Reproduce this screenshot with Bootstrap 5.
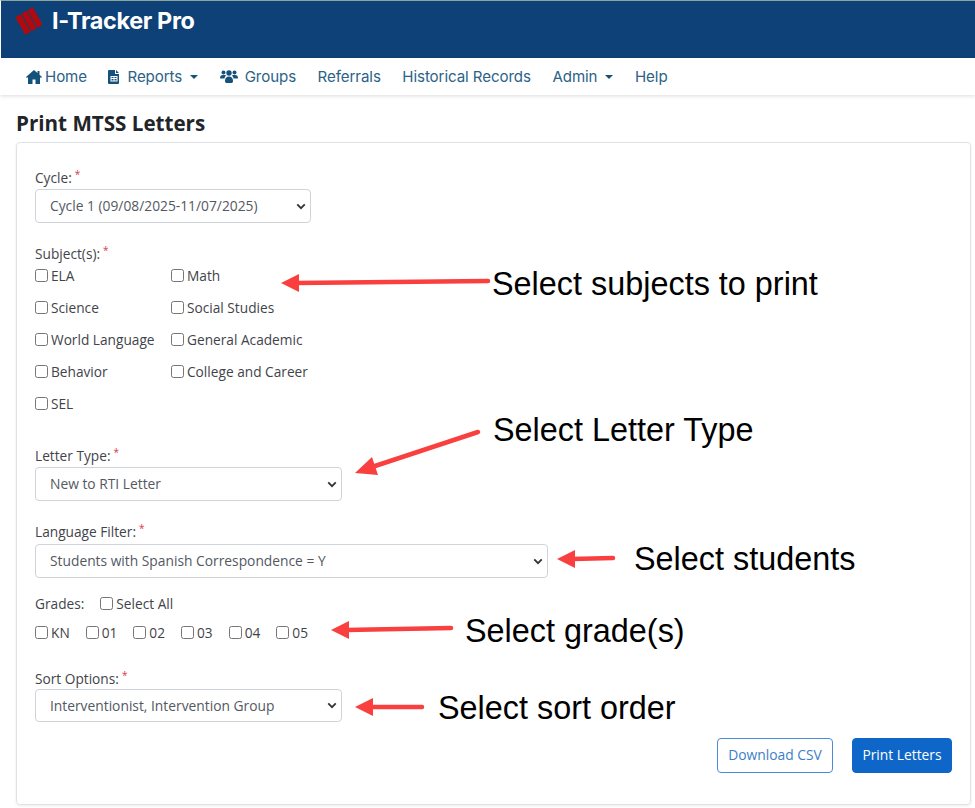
<!DOCTYPE html>
<html lang="en"><head><meta charset="utf-8"><title>Print MTSS Letters</title>
<link href="https://cdn.jsdelivr.net/npm/bootstrap@5.3.0/dist/css/bootstrap.min.css" rel="stylesheet">
<style>
html,body{height:100%;overflow:hidden}
body{position:relative;background:#fff;font-family:"Open Sans","Noto Sans",sans-serif;font-size:13.7px;color:#3a3f44}
.app-head{height:58px;background:#0e4177;border-top:1px solid #8aa59a;border-left:1px solid #fff;display:flex;padding:5px 0 0 15px;gap:10px}
.app-title{font-family:Inter,"Open Sans",sans-serif;font-weight:700;font-size:23.4px;line-height:30px;color:#fff;letter-spacing:-.35px}
.app-logo{width:26px;height:30px;display:block}
.main-nav{height:37px;background:#fff;box-shadow:0 1px 4px rgba(0,0,0,.14);padding:1px 0 0 26px;position:relative;align-items:center;gap:21.5px}
.main-nav a{font-family:Inter,"Open Sans",sans-serif;font-size:15.1px;color:#2b6288;text-decoration:none;display:flex;align-items:center;white-space:nowrap;letter-spacing:-.08px}
.main-nav a svg{fill:#14527c;margin-right:3px;display:block}
.main-nav .dropdown-toggle::after{color:#14527c;margin-left:8px}
.page-title{font-family:"Open Sans",sans-serif;font-weight:700;font-size:20.6px;line-height:28px;color:#212529;margin:14px 0 5px 16px}
.form-panel{margin:0 4px 0 16px;height:663px;border:1px solid #dfe2e6;border-radius:4px;box-shadow:0 1px 3px rgba(0,0,0,.08);padding:25px 18px 0 18px}
.fld-label{display:block;line-height:20px;margin:0;color:#3f4449}
.req{color:#dc3545;font-size:10px;position:relative;top:-5px;margin-left:3px;line-height:0}
.form-select.pick{height:34px;font-size:13.8px;color:#54595f;padding:1px 30px 0 14px;border-color:#ced4da;border-radius:4px;margin-top:1px;background-image:url("data:image/svg+xml,%3csvg xmlns='http://www.w3.org/2000/svg' viewBox='0 0 12 8'%3e%3cpath fill='none' stroke='%23333' stroke-width='2.200' d='M1.500 1.500 6 6l4.500-4.500'/%3e%3c/svg%3e");background-size:10px 7px;background-position:right 4px center}
.w1{width:276px}.w2{width:307px}.w3{width:513px;margin-top:2px!important}
.form-select.pick.short{height:33px;margin-top:0}
.chk-grid{display:grid;grid-template-columns:136px auto;justify-content:start;grid-auto-rows:32px;margin-top:2px}
.chk{display:flex;align-items:flex-start;gap:3px;line-height:20px;color:#3f4449;margin:0;white-space:nowrap}
.chk input{appearance:none;width:13px;height:13px;border:1px solid #767676;border-radius:2.5px;background:#fff;margin:3px 0 0 0;flex:none}
.chk-row{display:flex;gap:16px;margin-top:9px;height:20px}
.grades-top{display:flex;gap:16px;line-height:20px;margin-top:16px}
.btn-dl,.btn-pr{height:35px;font-size:13.8px;padding:0;border-radius:4px}
.btn-dl{width:116px;color:#3d7ec9;border:1px solid #4a8bd6;background:#fff}
.btn-pr{width:100px;color:#fff;background:#0d66c8;border:1px solid #0d66c8}
.act-row{display:flex;justify-content:flex-end;gap:19px;margin:16px 0 0}
.note{position:absolute;font-family:"Liberation Sans",sans-serif;font-size:32.4px;line-height:36px;color:#000;white-space:nowrap}
.arrows{position:absolute;left:0;top:0;pointer-events:none}
</style></head><body>
<header class="app-head">
<svg class="app-logo" viewBox="0 0 26 30"><g fill="#b00a0e" transform="rotate(-30 13 15)"><rect x="3" y="5" width="6" height="20"/><rect x="10" y="5" width="6" height="20"/><rect x="17" y="5" width="6" height="20"/></g></svg>
<div class="app-title">I-Tracker Pro</div>
</header>
<nav class="main-nav d-flex">
<a href="#"><svg width="16" height="14" viewBox="0 0 16 14"><path d="M8 0 0 7l1 1 1-.9V14h4.500V9.500h3V14H14V7.100l1 .9 1-1-2.500-2.200V1H11.500v2.100z"/></svg>Home</a>
<a href="#" class="dropdown-toggle"><svg width="12" height="14" viewBox="0 0 12 14"><path fill-rule="evenodd" d="M1 0h6v4h4v9a1 1 0 0 1-1 1H1a1 1 0 0 1-1-1V1a1 1 0 0 1 1-1zm7 0 3 3H8zM2.500 6v5.500h7V6zm1 1h2v1h-2zm3 0h2v1h-2zm-3 2h2v1.500h-2zm3 0h2v1.500h-2z"/></svg><span class="ms-1">Reports</span></a>
<a href="#"><svg width="18" height="13" viewBox="0 0 18 13"><circle cx="3.500" cy="2.500" r="2"/><circle cx="14.500" cy="2.500" r="2"/><circle cx="9" cy="3" r="2.700"/><path d="M0 8c0-2 1-3 3-3h2c.5 0 1 .2 1 .5C5 6.500 4.500 7.500 4.500 8.500H1c-.6 0-1-.1-1-.5zm18 0c0-2-1-3-3-3h-2c-.5 0-1 .2-1 .5 1 1 1.500 2 1.500 3H17c.6 0 1-.1 1-.5zM5 11c0-3 1.500-4.500 4-4.500S13 8 13 11c0 1-.5 2-1.500 2h-5C5.500 13 5 12 5 11z"/></svg><span class="ms-1">Groups</span></a>
<a href="#">Referrals</a>
<a href="#">Historical Records</a>
<a href="#" class="dropdown-toggle">Admin</a>
<a href="#">Help</a>
</nav>
<h1 class="page-title">Print MTSS Letters</h1>
<form class="form-panel">
<label class="fld-label">Cycle:<span class="req">*</span></label>
<select class="form-select pick w1"><option>Cycle 1 (09/08/2025-11/07/2025)</option></select>
<label class="fld-label" style="margin-top:21px">Subject(s):<span class="req">*</span></label>
<div class="chk-grid">
<label class="chk"><input type="checkbox">ELA</label><label class="chk"><input type="checkbox">Math</label>
<label class="chk"><input type="checkbox">Science</label><label class="chk"><input type="checkbox">Social Studies</label>
<label class="chk"><input type="checkbox">World Language</label><label class="chk"><input type="checkbox">General Academic</label>
<label class="chk"><input type="checkbox">Behavior</label><label class="chk"><input type="checkbox">College and Career</label>
<label class="chk"><input type="checkbox">SEL</label>
</div>
<label class="fld-label" style="margin-top:20px">Letter Type:<span class="req">*</span></label>
<select class="form-select pick w2"><option>New to RTI Letter</option></select>
<label class="fld-label" style="margin-top:21px">Language Filter:<span class="req">*</span></label>
<select class="form-select pick w3"><option>Students with Spanish Correspondence = Y</option></select>
<div class="grades-top"><span class="fld-label">Grades:</span><label class="chk"><input type="checkbox">Select All</label></div>
<div class="chk-row">
<label class="chk"><input type="checkbox">KN</label><label class="chk"><input type="checkbox">01</label><label class="chk"><input type="checkbox">02</label><label class="chk"><input type="checkbox">03</label><label class="chk"><input type="checkbox">04</label><label class="chk"><input type="checkbox">05</label>
</div>
<label class="fld-label" style="margin-top:26px">Sort Options:<span class="req">*</span></label>
<select class="form-select pick w2 short"><option>Interventionist, Intervention Group</option></select>
<div class="act-row"><button type="button" class="btn btn-dl">Download CSV</button><button type="button" class="btn btn-pr">Print Letters</button></div>
</form>
<svg class="arrows" width="975" height="808" viewBox="0 0 975 808">
<g stroke="#f9403f" stroke-width="4.500" stroke-linecap="round" fill="none">
<path d="M296 283 488 281"/><path d="M372 467 478 432"/><path d="M572 559 613 558"/><path d="M346 630 451 628"/><path d="M370 707 422 707"/>
</g>
<g fill="#f9403f">
<path d="M281 283 299 274 299 292z"/><path d="M355 473 372 457 378 475z"/><path d="M557 559 575 550 575 568z"/><path d="M331 630 349 621 349 639z"/><path d="M355 707 373 698 373 716z"/>
</g>
</svg>
<div class="note" style="left:492px;top:266px">Select subjects to print</div>
<div class="note" style="left:493px;top:412px">Select Letter Type</div>
<div class="note" style="left:634px;top:541px">Select students</div>
<div class="note" style="left:465px;top:613px">Select grade(s)</div>
<div class="note" style="left:438px;top:690px">Select sort order</div>
<script src="https://cdn.jsdelivr.net/npm/bootstrap@5.3.0/dist/js/bootstrap.bundle.min.js"></script>
</body></html>
